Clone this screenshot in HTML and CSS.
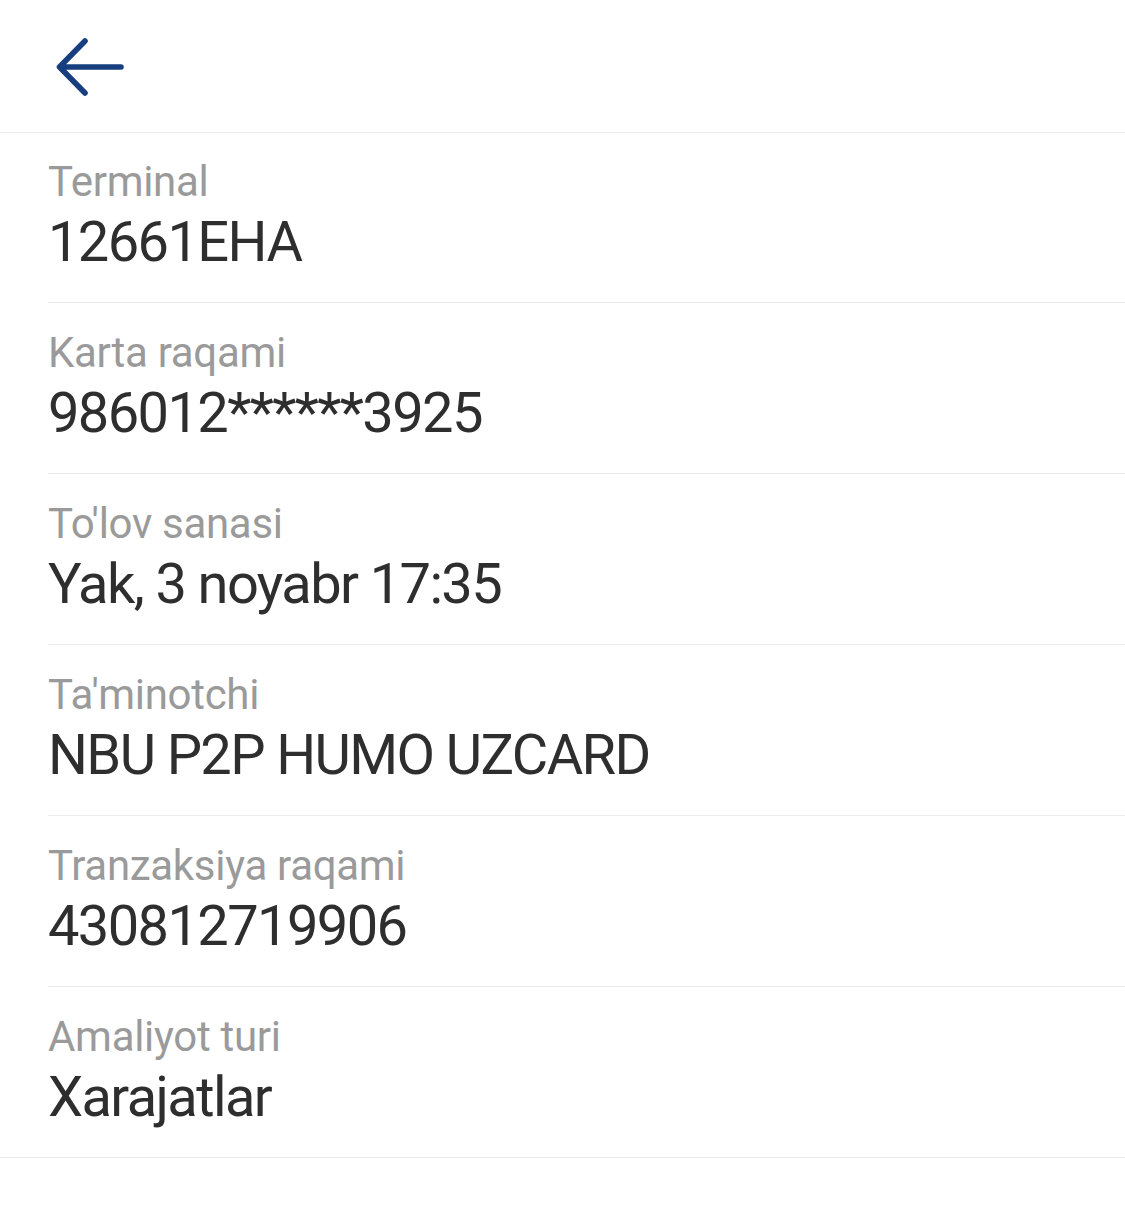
FILE: index.html
```html
<!DOCTYPE html>
<html>
<head>
<meta charset="utf-8">
<link rel="stylesheet" href="styles.css">
</head>
<body>
<header class="topbar">
  <svg class="back" width="80" height="64" viewBox="0 0 80 64">
    <path d="M65 32 H4 M29 6 L3.5 32 L29 58" fill="none" stroke="#173f7f" stroke-width="5.6" stroke-linecap="round" stroke-linejoin="round"/>
  </svg>
</header>
<main class="list">
  <div class="row"><div class="label">Terminal</div><div class="value">12661EHA</div></div>
  <div class="row"><div class="label">Karta raqami</div><div class="value">986012******3925</div></div>
  <div class="row"><div class="label">To'lov sanasi</div><div class="value">Yak, 3 noyabr 17:35</div></div>
  <div class="row"><div class="label">Ta'minotchi</div><div class="value">NBU P2P HUMO UZCARD</div></div>
  <div class="row"><div class="label">Tranzaksiya raqami</div><div class="value">430812719906</div></div>
  <div class="row last"><div class="label">Amaliyot turi</div><div class="value">Xarajatlar</div></div>
</main>
</body>
</html>
```
FILE: styles.css
```css
html, body {
  margin: 0;
  padding: 0;
  background: #ffffff;
}
body {
  font-family: Roboto, "Noto Sans", sans-serif;
  width: 1125px;
}
.topbar {
  height: 133px;
  border-bottom: 1px solid #ececec;
  display: flex;
  align-items: center;
  padding-left: 56px;
  box-sizing: border-box;
}
.back {
  display: block;
  margin-top: 1px;
}
.list {
  padding-left: 48px;
}
.row {
  padding-top: 24px;
  padding-bottom: 29px;
  border-bottom: 1px solid #ececec;
}
.row + .row {
  padding-top: 25px;
}
.row.last {
  margin-left: -48px;
  padding-left: 48px;
}
.label {
  font-size: 42px;
  line-height: 50px;
  color: #9a9a9a;
  letter-spacing: -0.3px;
}
.value {
  margin-top: 4px;
  font-size: 56px;
  line-height: 62px;
  color: #2e2e2e;
  letter-spacing: -1.6px;
}
```
